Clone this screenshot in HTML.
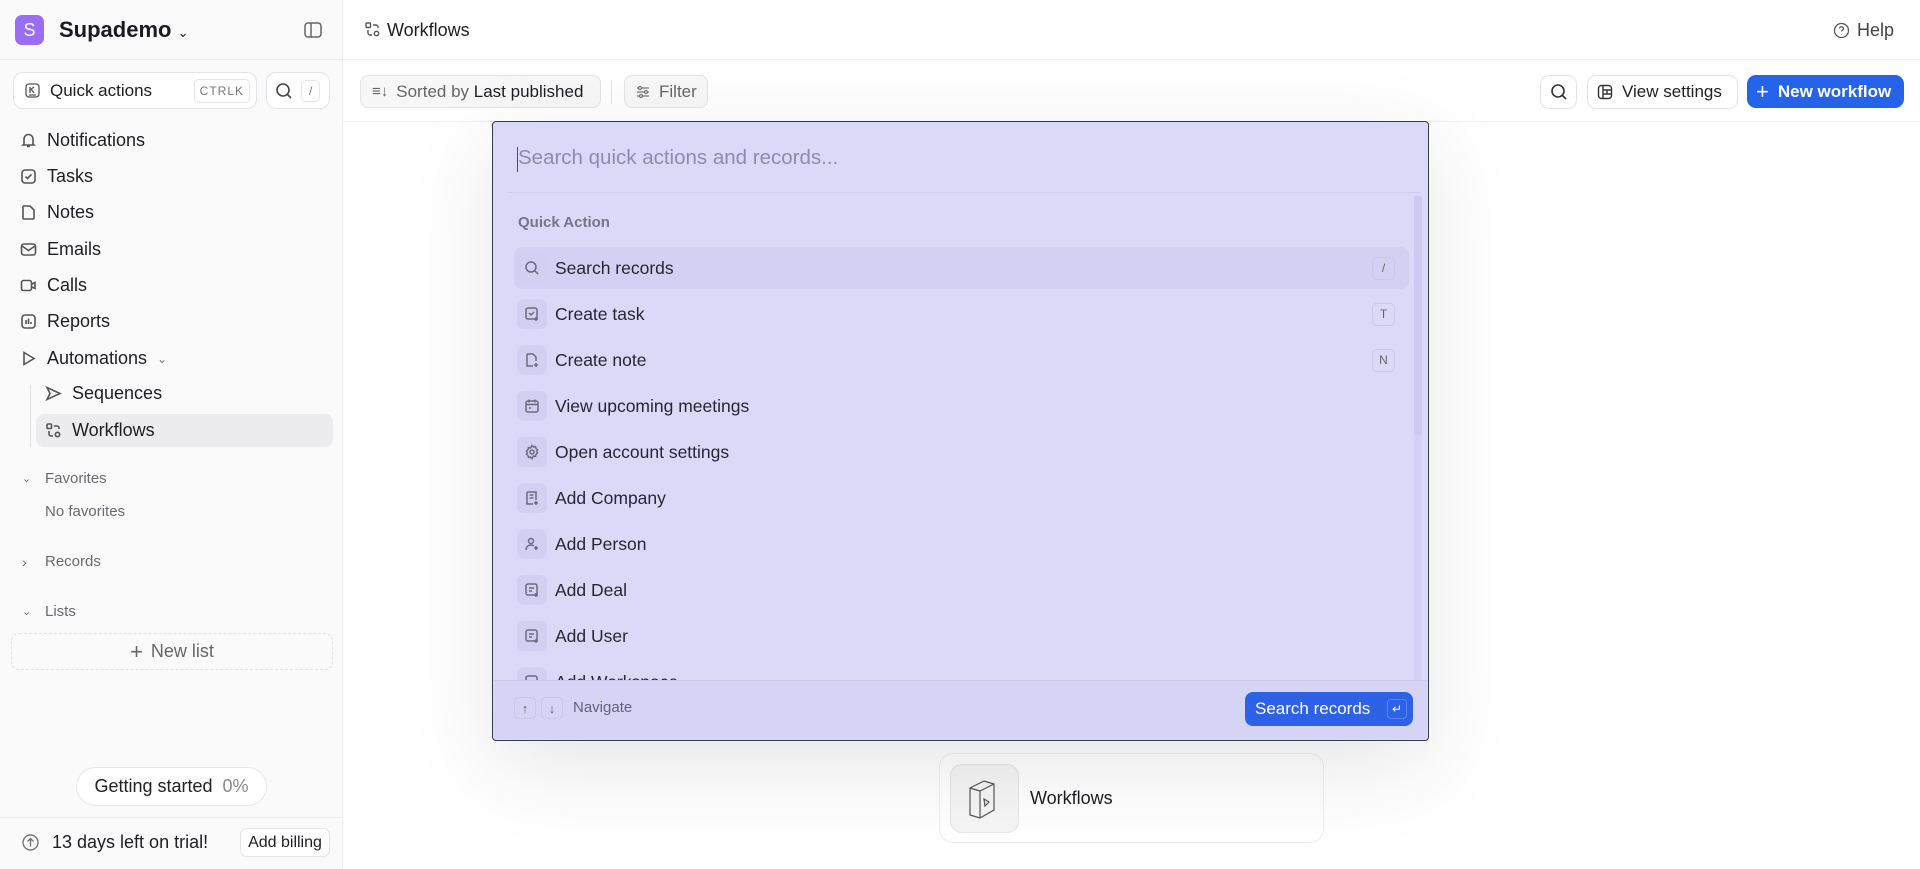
<!DOCTYPE html>
<html><head><meta charset="utf-8"><style>
*{box-sizing:border-box;margin:0;padding:0}
body{width:1920px;height:869px;overflow:hidden;font-family:"Liberation Sans",sans-serif;background:#fff;position:relative;color:#1d1d22}
.abs{position:absolute}
.sb{left:0;top:0;width:343px;height:869px;background:#fafafa;border-right:1px solid #ececec}
.nav{position:absolute;left:20px;font-size:18px;display:flex;align-items:center;gap:10px;color:#1e1e24}
.nav svg{width:17px;height:17px;stroke:#555;fill:none;stroke-width:1.6}
.sec{position:absolute;left:22px;font-size:15px;color:#6a6a72;display:flex;align-items:center}
.sec i{display:inline-block;width:23px;font-style:normal}
.btn{position:absolute;border:1px solid #e4e4e8;border-radius:8px;background:#fff;display:flex;align-items:center;font-size:17px}
.item{position:absolute;left:514px;width:895px;height:42px;display:flex;align-items:center;font-size:17.5px;color:#272636;border-radius:8px}
.ic{width:30px;height:30px;border-radius:7px;background:#d2d0f0;margin-left:3px;margin-right:8px;display:flex;align-items:center;justify-content:center}
.ic svg{width:16px;height:16px;stroke:#6b6a80;fill:none;stroke-width:1.5}
.kbd{position:absolute;right:14px;width:23px;height:23px;border:1px solid #c9c7ea;border-radius:5px;font-size:12px;color:#666;display:flex;align-items:center;justify-content:center}
</style></head><body>
<div class="abs sb"></div>
<div class="abs" style="left:15px;top:15px;width:29px;height:30px;border-radius:7px;background:#9b6cf6;color:#fff;font-size:18px;display:flex;align-items:center;justify-content:center">S</div>
<div class="abs" style="left:59px;top:17px;font-size:22px;font-weight:bold;color:#1a1a20">Supademo <span style="font-size:13px;font-weight:normal">&#8964;</span></div>
<svg class="abs" style="left:303px;top:20px" width="20" height="20" viewBox="0 0 20 20" fill="none" stroke="#666" stroke-width="1.5"><rect x="2" y="3" width="16" height="14" rx="3"/><line x1="8" y1="3" x2="8" y2="17"/></svg>
<div class="abs" style="left:0;top:59px;width:343px;border-top:1px solid #ececec"></div>
<div class="btn" style="left:13px;top:72px;width:244px;height:37px;border-radius:10px"><svg style="margin-left:11px" width="15" height="15" viewBox="0 0 15 15" fill="none" stroke="#555" stroke-width="1.3"><rect x="1" y="1" width="13" height="13" rx="3"/><path d="M5 4v6M5 7l4-3M6 6l3 4M4 12h7"/></svg><span style="margin-left:10px">Quick actions</span><span style="margin-left:auto;margin-right:6px;font-size:12px;color:#777;border:1px solid #e6e6e6;border-radius:5px;padding:4px 5px;letter-spacing:1px">CTRLK</span></div>
<div class="btn" style="left:266px;top:72px;width:64px;height:37px;border-radius:10px"><svg style="margin-left:8px" width="18" height="18" viewBox="0 0 18 18" fill="none" stroke="#444" stroke-width="1.6"><circle cx="8" cy="8" r="6"/><path d="M12.5 12.5l3.5 3.5"/></svg><span style="margin-left:8px;font-size:12px;color:#777;border:1px solid #e6e6e6;border-radius:5px;padding:3px 7px">/</span></div>
<div class="nav" style="top:130px"><svg viewBox="0 0 17 17"><path d="M4 12V7a4.5 4.5 0 019 0v5l1 1H3zM7 14.5h3"/></svg>Notifications</div>
<div class="nav" style="top:166px"><svg viewBox="0 0 17 17"><rect x="2" y="2" width="13" height="13" rx="3"/><path d="M5.5 8.5l2 2 4-4"/></svg>Tasks</div>
<div class="nav" style="top:202px"><svg viewBox="0 0 17 17"><path d="M3 3a1 1 0 011-1h6l4 4v8a1 1 0 01-1 1H4a1 1 0 01-1-1z"/></svg>Notes</div>
<div class="nav" style="top:239px"><svg viewBox="0 0 17 17"><rect x="1.5" y="3" width="14" height="11" rx="2.5"/><path d="M2 5l6.5 4.5L15 5"/></svg>Emails</div>
<div class="nav" style="top:275px"><svg viewBox="0 0 17 17"><rect x="1.5" y="3.5" width="10" height="10" rx="2"/><path d="M12 7l3-1.5v6L12 10"/></svg>Calls</div>
<div class="nav" style="top:311px"><svg viewBox="0 0 17 17"><rect x="2" y="2" width="13" height="13" rx="3"/><path d="M6 11V7M8.5 11V5.5M11 11V9"/></svg>Reports</div>
<div class="nav" style="top:348px"><svg viewBox="0 0 17 17"><path d="M4 2.5l10 6-10 6z"/></svg>Automations <span style="font-size:12px;color:#777">&#8964;</span></div>
<div class="abs" style="left:30px;top:385px;height:62px;border-left:1px solid #e3e3e3"></div>
<div class="abs" style="left:36px;top:414px;width:297px;height:33px;border-radius:8px;background:#ececef"></div>
<div class="nav" style="left:45px;top:383px"><svg viewBox="0 0 17 17"><path d="M2 2.5l13 6-13 6 3-6z"/></svg>Sequences</div>
<div class="nav" style="left:45px;top:420px"><svg viewBox="0 0 17 17"><rect x="2" y="2" width="4.5" height="4.5" rx="1"/><circle cx="12.5" cy="12.5" r="2.2"/><path d="M9 4h3a2 2 0 012 2v1M4 9v3a2 2 0 002 2h2"/></svg>Workflows</div>
<div class="sec" style="top:470px"><i style="font-size:11px">&#8964;</i>Favorites</div>
<div class="abs" style="left:45px;top:503px;font-size:15px;color:#6a6a72">No favorites</div>
<div class="sec" style="top:553px"><i style="font-size:14px">&#8250;</i>Records</div>
<div class="sec" style="top:603px"><i style="font-size:11px">&#8964;</i>Lists</div>
<div class="abs" style="left:11px;top:633px;width:322px;height:37px;border:1px dashed #e2e2e2;border-radius:8px;display:flex;align-items:center;justify-content:center;font-size:18px;color:#666"><span style="font-size:22px;margin-right:8px;font-weight:300">+</span>New list</div>
<div class="abs" style="left:76px;top:767px;width:191px;height:39px;border:1px solid #e6e6e6;border-radius:20px;background:#fff;display:flex;align-items:center;justify-content:center;font-size:18px;color:#222">Getting started&nbsp;&nbsp;<span style="color:#888">0%</span></div>
<div class="abs" style="left:0;top:817px;width:343px;border-top:1px solid #ececec"></div>
<svg class="abs" style="left:21px;top:833px" width="19" height="19" viewBox="0 0 19 19" fill="none" stroke="#777" stroke-width="1.4"><circle cx="9.5" cy="9.5" r="7.5"/><path d="M9.5 13.5v-8M6.5 8.5l3-3 3 3"/></svg>
<div class="abs" style="left:52px;top:832px;font-size:18px;color:#1e1e24">13 days left on trial!</div>
<div class="btn" style="left:240px;top:828px;width:90px;height:29px;font-size:16px;justify-content:center;border-radius:7px">Add billing</div>

<!-- header -->
<svg class="abs" style="left:364px;top:21px" width="17" height="17" viewBox="0 0 17 17" fill="none" stroke="#555" stroke-width="1.4"><rect x="2" y="2" width="4.5" height="4.5" rx="1"/><circle cx="12.5" cy="12.5" r="2.2"/><path d="M9 4h3a2 2 0 012 2v1M4 9v3a2 2 0 002 2h2"/></svg>
<div class="abs" style="left:387px;top:20px;font-size:18px">Workflows</div>
<svg class="abs" style="left:1833px;top:22px" width="17" height="17" viewBox="0 0 17 17" fill="none" stroke="#555" stroke-width="1.3"><circle cx="8.5" cy="8.5" r="7"/><path d="M6.5 6.5a2 2 0 114 .5c0 1-2 1.3-2 2.5M8.5 12v.5"/></svg>
<div class="abs" style="left:1857px;top:20px;font-size:18px;color:#444">Help</div>
<div class="abs" style="left:343px;top:59px;width:1577px;border-top:1px solid #efefef"></div>
<div class="abs" style="left:343px;top:121px;width:1577px;border-top:1px solid #efefef"></div>
<div class="btn" style="left:360px;top:75px;width:241px;height:33px;background:#f7f7f8;color:#666"><span style="margin-left:11px;font-size:15px">&#8801;&#8595;</span><span style="margin-left:8px">Sorted by <span style="color:#1e1e24">Last published</span></span></div>
<div class="abs" style="left:611px;top:80px;height:24px;border-left:1px solid #e6e6e6"></div>
<div class="btn" style="left:624px;top:75px;width:84px;height:33px;background:#f7f7f8;color:#666"><svg style="margin-left:10px" width="16" height="16" viewBox="0 0 16 16" fill="none" stroke="#777" stroke-width="1.3"><path d="M2 4h12M2 8h12M2 12h12"/><circle cx="5" cy="4" r="1.5" fill="#f7f7f8"/><circle cx="11" cy="8" r="1.5" fill="#f7f7f8"/><circle cx="6" cy="12" r="1.5" fill="#f7f7f8"/></svg><span style="margin-left:8px">Filter</span></div>
<div class="btn" style="left:1540px;top:75px;width:37px;height:34px;justify-content:center;border-radius:9px"><svg width="18" height="18" viewBox="0 0 18 18" fill="none" stroke="#333" stroke-width="1.6"><circle cx="8" cy="8" r="6"/><path d="M12.5 12.5l3.5 3.5"/></svg></div>
<div class="btn" style="left:1587px;top:75px;width:151px;height:34px;border-radius:9px"><svg style="margin-left:9px" width="16" height="16" viewBox="0 0 16 16" fill="none" stroke="#333" stroke-width="1.4"><rect x="1.5" y="1.5" width="13" height="13" rx="3"/><path d="M6 1.5v13M6 6h8.5M6 10h8.5M10 6v4"/></svg><span style="margin-left:9px;color:#1e1e24">View settings</span></div>
<div class="abs" style="left:1747px;top:75px;width:157px;height:33px;border-radius:9px;background:#2563eb;color:#fff;font-size:17px;font-weight:bold;display:flex;align-items:center"><span style="margin-left:9px;font-weight:300;font-size:22px">+</span><span style="margin-left:9px">New workflow</span></div>

<!-- bottom card -->
<div class="abs" style="left:939px;top:753px;width:385px;height:90px;border:1px solid #eee;border-radius:14px;background:#fff"></div>
<div class="abs" style="left:950px;top:764px;width:69px;height:69px;border:1px solid #e6e6e6;border-radius:12px;background:#f5f5f5"></div>
<svg class="abs" style="left:966px;top:778px" width="36" height="42" viewBox="0 0 36 42" fill="none" stroke="#555" stroke-width="1.2"><path d="M4 10l14-7 10 3v26l-14 8-10-3z"/><path d="M4 10l10 3v27M14 13l14-7"/><path d="M18 21l5 3-4 4z"/></svg>
<div class="abs" style="left:1030px;top:788px;font-size:18px">Workflows</div>

<!-- modal -->
<div class="abs" style="left:492px;top:121px;width:937px;height:620px;background:#dbd9f8;border:1.5px solid #3a3a44;border-radius:4px;box-shadow:0 25px 90px rgba(0,0,0,0.10)"></div>
<div class="abs" style="left:517px;top:147px;width:1px;height:25px;background:#4b4b7a"></div>
<div class="abs" style="left:518px;top:146px;font-size:20.5px;color:#8d8cb0">Search quick actions and records...</div>
<div class="abs" style="left:507px;top:192px;width:914px;border-top:1px solid #cfcdf0"></div>
<div class="abs" style="left:518px;top:214px;font-size:15px;color:#75758c;font-weight:bold">Quick Action</div>
<div class="abs" style="left:1414px;top:196px;width:8px;height:484px;background:rgba(200,198,238,0.4)"></div>
<div class="abs" style="left:1414px;top:196px;width:8px;height:239px;background:#cccaf0;border-radius:3px"></div>

<div class="item" style="top:247px;background:#d3d1f3"><div class="ic"><svg viewBox="0 0 16 16"><circle cx="7" cy="7" r="5"/><path d="M11 11l3 3"/></svg></div>Search records<div class="kbd">/</div></div>
<div class="item" style="top:293px"><div class="ic"><svg viewBox="0 0 16 16"><rect x="2" y="2" width="11" height="11" rx="2"/><path d="M5 7l2 2 3-3M12 11v4M10 13h4"/></svg></div>Create task<div class="kbd">T</div></div>
<div class="item" style="top:339px"><div class="ic"><svg viewBox="0 0 16 16"><path d="M3 2h6l3 3v4M3 2v12h6M12 11v4M10 13h4"/></svg></div>Create note<div class="kbd">N</div></div>
<div class="item" style="top:385px"><div class="ic"><svg viewBox="0 0 16 16"><rect x="2" y="3" width="12" height="11" rx="2"/><path d="M5 1.5v3M11 1.5v3M2 6.5h12M5 10h2"/></svg></div>View upcoming meetings</div>
<div class="item" style="top:431px"><div class="ic"><svg viewBox="0 0 16 16"><circle cx="8" cy="8" r="2"/><path d="M8 1.5l1.5 1.5 2-.5.5 2 1.5 1.5-1 1.5 1 1.5-1.5 1.5-.5 2-2-.5L8 14.5 6.5 13l-2 .5-.5-2L2.5 10l1-1.5-1-1.5L4 5.5l.5-2 2 .5z"/></svg></div>Open account settings</div>
<div class="item" style="top:477px"><div class="ic"><svg viewBox="0 0 16 16"><path d="M3 2h9v8M3 2v12h6M5.5 5h4M5.5 8h4M12 11v4M10 13h4"/></svg></div>Add Company</div>
<div class="item" style="top:523px"><div class="ic"><svg viewBox="0 0 16 16"><circle cx="7" cy="5" r="2.5"/><path d="M2 14c0-3 2-5 5-5 1 0 2 .3 3 1M12 10v4M10 12h4"/></svg></div>Add Person</div>
<div class="item" style="top:569px"><div class="ic"><svg viewBox="0 0 16 16"><rect x="2" y="2" width="11" height="11" rx="2"/><path d="M5 6h5M5 9h3M12 11v4M10 13h4"/></svg></div>Add Deal</div>
<div class="item" style="top:615px"><div class="ic"><svg viewBox="0 0 16 16"><rect x="2" y="2" width="11" height="11" rx="2"/><path d="M5 6h5M5 9h3M12 11v4M10 13h4"/></svg></div>Add User</div>
<div class="abs" style="left:514px;top:661px;width:895px;height:19px;overflow:hidden"><div class="item" style="left:0;top:0"><div class="ic"><svg viewBox="0 0 16 16"><rect x="2" y="2" width="11" height="11" rx="2"/></svg></div>Add Workspace</div></div>

<div class="abs" style="left:494px;top:680px;width:933px;height:59px;background:#d6d4f5;border-top:1px solid #cbc9ee;border-radius:0 0 4px 4px"></div>
<div class="abs" style="left:514px;top:697px;width:22px;height:22px;border:1px solid #c9c7ea;border-radius:5px;font-size:13px;color:#666;display:flex;align-items:center;justify-content:center">&#8593;</div>
<div class="abs" style="left:541px;top:697px;width:22px;height:22px;border:1px solid #c9c7ea;border-radius:5px;font-size:13px;color:#666;display:flex;align-items:center;justify-content:center">&#8595;</div>
<div class="abs" style="left:573px;top:699px;font-size:15px;color:#62627a">Navigate</div>
<div class="abs" style="left:1245px;top:692px;width:168px;height:34px;border-radius:8px;background:#2d62e6;color:#fff;font-size:17px;display:flex;align-items:center"><span style="margin-left:10px">Search records</span><span style="margin-left:auto;margin-right:6px;width:20px;height:20px;border:1px solid #5b85ee;border-radius:4px;font-size:12px;display:flex;align-items:center;justify-content:center">&#8629;</span></div>
</body></html>
